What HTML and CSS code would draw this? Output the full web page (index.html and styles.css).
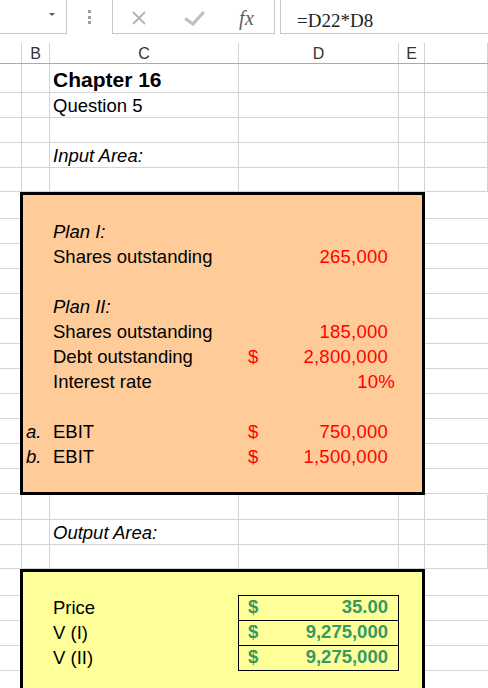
FILE: index.html
```html
<!DOCTYPE html>
<html>
<head>
<meta charset="utf-8">
<link rel="stylesheet" href="styles.css">
</head>
<body>
<div class="toolbar">
  <div class="namebox"><span class="caret"></span></div>
  <div class="grip"><i></i><i></i><i></i></div>
  <div class="fxbtns">
    <svg class="ico-x" width="14" height="14" viewBox="0 0 14 14"><path d="M1 1L13 13M13 1L1 13" stroke="#b4b4b4" stroke-width="1.8" fill="none"/></svg>
    <svg class="ico-check" width="21" height="17" viewBox="0 0 21 17"><path d="M1.2 9.5L9 15L19.8 3" stroke="#c0c0c0" stroke-width="3.2" fill="none"/></svg>
    <span class="fx">fx</span>
  </div>
  <div class="formula">=D22*D8</div>
</div>

<div class="heads">
  <div></div><div>B</div><div>C</div><div>D</div><div>E</div><div></div>
</div>

<div class="sheet">
  <div class="row tall"><div></div><div></div><div class="title">Chapter 16</div><div></div><div></div><div></div></div>
  <div class="row"><div></div><div></div><div>Question 5</div><div></div><div></div><div></div></div>
  <div class="row"><div></div><div></div><div></div><div></div><div></div><div></div></div>
  <div class="row"><div></div><div></div><div class="it">Input Area:</div><div></div><div></div><div></div></div>
  <div class="row short"><div></div><div></div><div></div><div></div><div></div><div></div></div>

  <div class="band">
    <div class="gutter"><div></div><div></div><div></div><div></div><div></div><div></div><div></div><div></div><div></div><div></div><div></div><div></div></div>
    <div class="box orange">
      <div class="brow"><div></div><div class="lbl it">Plan I:</div><div></div><div></div></div>
      <div class="brow"><div></div><div class="lbl">Shares outstanding</div><div class="num"><span class="v">265,000</span></div><div></div></div>
      <div class="brow"><div></div><div></div><div></div><div></div></div>
      <div class="brow"><div></div><div class="lbl it">Plan II:</div><div></div><div></div></div>
      <div class="brow"><div></div><div class="lbl">Shares outstanding</div><div class="num"><span class="v">185,000</span></div><div></div></div>
      <div class="brow"><div></div><div class="lbl">Debt outstanding</div><div class="num"><span>$</span><span class="v">2,800,000</span></div><div></div></div>
      <div class="brow"><div></div><div class="lbl">Interest rate</div><div class="num pct"><span class="v">10%</span></div><div></div></div>
      <div class="brow"><div></div><div></div><div></div><div></div></div>
      <div class="brow"><div class="mark it">a.</div><div class="lbl">EBIT</div><div class="num"><span>$</span><span class="v">750,000</span></div><div></div></div>
      <div class="brow"><div class="mark it">b.</div><div class="lbl">EBIT</div><div class="num"><span>$</span><span class="v">1,500,000</span></div><div></div></div>
    </div>
    <div class="gutter"><div></div><div></div><div></div><div></div><div></div><div></div><div></div><div></div><div></div><div></div><div></div><div></div></div>
  </div>

  <div class="row"><div></div><div></div><div></div><div></div><div></div><div></div></div>
  <div class="row"><div></div><div></div><div class="it">Output Area:</div><div></div><div></div><div></div></div>
  <div class="row short"><div></div><div></div><div></div><div></div><div></div><div></div></div>

  <div class="band">
    <div class="gutter"><div></div><div></div><div></div><div></div><div></div></div>
    <div class="box yellow">
      <div class="yrow first"><div></div><div class="lbl">Price</div><div class="out"><span>$</span><span class="v">35.00</span></div><div></div></div>
      <div class="yrow"><div></div><div class="lbl">V (I)</div><div class="out"><span>$</span><span class="v">9,275,000</span></div><div></div></div>
      <div class="yrow"><div></div><div class="lbl">V (II)</div><div class="out"><span>$</span><span class="v">9,275,000</span></div><div></div></div>
    </div>
    <div class="gutter"><div></div><div></div><div></div><div></div><div></div></div>
  </div>
</div>
</body>
</html>
```

FILE: styles.css
```css
* { box-sizing: border-box; }
html, body { margin: 0; padding: 0; }
body {
  width: 488px;
  height: 688px;
  overflow: hidden;
  background: #fff;
  color: #000;
  font-family: "Liberation Sans", Arial, sans-serif;
}

/* ---------- formula toolbar ---------- */
.toolbar { display: flex; height: 34px; }
.namebox {
  width: 67px;
  border-right: 1px solid #c6c6c6;
  border-bottom: 1px solid #c6c6c6;
  display: flex;
  justify-content: flex-end;
  align-items: flex-start;
  padding: 13px 11px 0 0;
}
.caret {
  width: 0; height: 0;
  border-left: 3px solid transparent;
  border-right: 3px solid transparent;
  border-top: 3.5px solid #5a5a5a;
}
.grip {
  width: 45px;
  display: flex;
  flex-direction: column;
  align-items: center;
  gap: 2.5px;
  padding-top: 10px;
}
.grip i { display: block; width: 3px; height: 3px; background: #a0a0a0; }
.fxbtns {
  width: 163px;
  border: 1px solid #c6c6c6;
  border-top: none;
  display: flex;
  align-items: center;
  padding: 2px 0 0 19px;
}
.ico-check { margin-left: 38px; }
.fx {
  margin-left: 34px;
  font-family: "Liberation Serif", serif;
  font-style: italic;
  font-size: 20px;
  line-height: 20px;
  color: #5e5e5e;
  letter-spacing: 0.5px;
}
.formula {
  flex: 1;
  margin-left: 5px;
  border-left: 1px solid #c6c6c6;
  border-bottom: 1px solid #c6c6c6;
  padding: 4px 0 0 16px;
  font-family: "Liberation Serif", serif;
  font-size: 19px;
  line-height: 33px;
  color: #222;
  white-space: nowrap;
}

/* ---------- column headers ---------- */
.heads {
  display: grid;
  grid-template-columns: 22px 28px 189px 160px 26px 1fr;
  margin-top: 9px;
  height: 21px;
  border-bottom: 1px solid #ababab;
}
.heads > div {
  border-right: 1px solid #d4d4d4;
  text-align: center;
  font-size: 16px;
  line-height: 18px;
  padding-top: 2px;
  color: #333;
}

/* ---------- sheet grid ---------- */
.row {
  display: grid;
  grid-template-columns: 22px 28px 189px 160px 26px 1fr;
  height: 25px;
}
.row.tall { height: 29px; }
.row.short { height: 24px; }
.row > div {
  border-right: 1px solid #d4d4d4;
  border-bottom: 1px solid #d4d4d4;
  display: flex;
  align-items: flex-end;
  padding-left: 3px;
  font-size: 18.5px;
  white-space: nowrap;
}
.row > div.title { font-weight: bold; font-size: 21px; }
.it { font-style: italic; }

.band {
  display: grid;
  grid-template-columns: 20px 405px 1fr;
}
.gutter > div { height: 25px; border-bottom: 1px solid #d4d4d4; }
.gutter > div:first-child { height: 27px; }

.box { border: 3px solid #000; }
.box.orange { background: #ffcc99; padding: 24px 0 23px; }
.box.yellow { background: #ffff99; padding: 23px 0 40px; }

.brow, .yrow {
  display: grid;
  grid-template-columns: 27px 188px 161px 23px;
  height: 25px;
  font-size: 18.5px;
}
.brow > div, .yrow > div {
  display: flex;
  align-items: flex-end;
  padding-bottom: 1px;
  white-space: nowrap;
}
.lbl, .mark { padding-left: 3px; }
.num { color: #ff0000; padding: 0 11px 1px 10px; }
.num .v { letter-spacing: 0.25px; }
.num.pct { padding-right: 4px; }
.v { margin-left: auto; }

.yrow.first { height: 26px; }
.yrow > div { padding-bottom: 2px; }
.yrow > div.out {
  border: 1px solid #000;
  border-top: none;
  color: #339966;
  font-weight: bold;
  padding: 0 10px 2px 9px;
}
.yrow.first > div.out { border-top: 1px solid #000; }
```
